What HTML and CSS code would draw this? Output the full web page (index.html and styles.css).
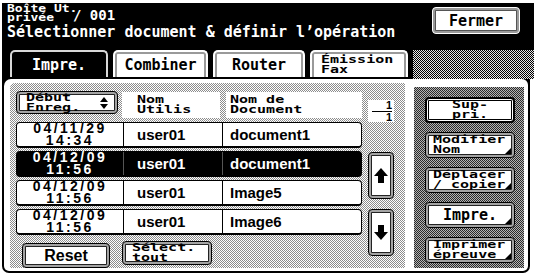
FILE: index.html
```html
<!DOCTYPE html>
<html lang="fr">
<head>
<meta charset="utf-8">
<title>Boîte Ut. privée</title>
<link rel="stylesheet" href="styles.css">
</head>
<body>
<div class="screen">
  <header class="top">
    <div class="titles">
      <div class="t1"><span class="sq sq-title">Boîte Ut.<br>privée</span><span class="num">/ 001</span></div>
      <div class="t2">Sélectionner document &amp; définir l’opération</div>
    </div>
    <div class="btn fermer">Fermer</div>
  </header>
  <nav class="tabs">
    <div class="tab active">Impre.</div>
    <div class="tab t-comb">Combiner</div>
    <div class="tab t-route">Router</div>
    <div class="tab t-fax"><span class="sq">Émission<br>Fax</span></div>
    <div class="tab-fill"></div>
  </nav>
  <div class="panel-wrap">
    <main class="panel">
      <section class="list">
        <div class="list-main">
          <div class="list-head">
            <div class="btn sort"><span class="sq">Début<br>Enreg.</span>
              <svg class="sort-ico" width="8" height="12" viewBox="0 0 8 12"><polygon points="4,0 8,5 0,5"/><polygon points="0,7 8,7 4,12"/></svg>
            </div>
            <div class="hcell h-user"><span class="sq">Nom<br>Utilis</span></div>
            <div class="hcell h-doc"><span class="sq">Nom de<br>Document</span></div>
          </div>
          <div class="rows">
            <div class="row"><div class="c date">04/11/29<br>14:34</div><div class="c user">user01</div><div class="c doc">document1</div></div>
            <div class="row sel"><div class="c date">04/12/09<br>11:56</div><div class="c user">user01</div><div class="c doc">document1</div></div>
            <div class="row"><div class="c date">04/12/09<br>11:56</div><div class="c user">user01</div><div class="c doc">Image5</div></div>
            <div class="row"><div class="c date">04/12/09<br>11:56</div><div class="c user">user01</div><div class="c doc">Image6</div></div>
          </div>
          <div class="list-foot">
            <div class="btn reset">Reset</div>
            <div class="btn selall"><span class="sq">Sélect.<br>tout</span></div>
          </div>
        </div>
        <div class="list-side">
          <div class="counter"><span class="cn">1</span><span class="cn cd">1</span></div>
          <div class="btn arrow up"><svg width="14" height="15" viewBox="0 0 14 15"><polygon points="7,0 14,8 10,8 10,15 4,15 4,8 0,8"/></svg></div>
          <div class="btn arrow down"><svg width="14" height="15" viewBox="0 0 14 15"><polygon points="4,0 10,0 10,7 14,7 7,15 0,7 4,7"/></svg></div>
        </div>
      </section>
      <aside class="actions">
        <div class="btn act sup"><span class="sq center">Sup-<br>pri.</span></div>
        <div class="btn act tri"><span class="sq">Modifier<br>Nom</span></div>
        <div class="btn act tri"><span class="sq">Déplacer<br>/ copier</span></div>
        <div class="btn act tri big">Impre.</div>
        <div class="btn act tri"><span class="sq">Imprimer<br>épreuve</span></div>
      </aside>
    </main>
  </div>
</div>
</body>
</html>
```
FILE: styles.css
```css
* { box-sizing: border-box; margin: 0; padding: 0; }
html, body { background: #fff; }
body {
  width: 534px; height: 276px; overflow: hidden;
  font-family: "DejaVu Sans Mono", "Liberation Mono", monospace;
  font-weight: bold; color: #000;
}
svg { display: block; fill: #000; }

.screen { margin: 3px 0 0 2px; width: 532px; }

/* header */
.top {
  height: 47px; background: #000; color: #fff;
  display: flex; justify-content: space-between; align-items: flex-start;
  padding-left: 5px;
}
.t1 { height: 20px; display: flex; align-items: center; }
.sq {
  display: inline-block; font-size: 15px; line-height: 13.7px;
  transform: scaleY(.73); transform-origin: left center; white-space: nowrap;
}
.sq.center { text-align: center; transform-origin: center center; }
.sq-title { font-size: 13px; line-height: 11px; transform: scaleY(.82); width: 66px; }
.num { font-size: 14px; margin-top: 3px; }
.t2 { font-size: 15px; line-height: 17px; margin-top: 1px; white-space: nowrap; }

.btn {
  background: #fff; color: #000;
  border: 1px solid #000; border-radius: 4px;
  box-shadow: inset 0 0 0 2px #a4a4a4, inset 0 0 0 3px #222;
  display: flex; align-items: center; position: relative;
}
.fermer {
  width: 88px; height: 27px; margin: 4px 14px 0 0;
  justify-content: center; font-size: 15px;
  border-color: #fff;
  box-shadow: inset 0 0 0 2px #9a9a9a, inset 0 0 0 3px #555;
}

/* tabs */
.tabs {
  height: 29px; background: #000; display: flex; align-items: flex-start;
  padding-left: 8px;
}
.tab {
  height: 27px; margin-right: 5px;
  border: 2px solid #fff; border-bottom: 0; border-radius: 5px 5px 0 0;
  background: #fff; color: #000;
  box-shadow: inset 0 2px 0 0 #9a9a9a, inset 2px 0 0 0 #9a9a9a, inset -2px 0 0 0 #9a9a9a;
  display: flex; align-items: center; justify-content: center;
  font-size: 15px;
}
.tab.active {
  width: 98px; background: #000; color: #fff;
  border-color: #d8d8d8; box-shadow: none;
}
.t-comb { width: 95px; }
.t-route { width: 92px; }
.t-fax { width: 98px; justify-content: flex-start; padding-left: 9px; }
.tab-fill {
  flex: 1; height: 29px; margin-left: 0;
  background: repeating-conic-gradient(#000 0 25%, #e6e6e6 0 50%) 0 0 / 2px 2px;
}

/* panel */
.panel-wrap {
  width: 528px; background: #000; padding: 0 2px 2px;
  border-radius: 0 0 7px 7px;
}
.panel {
  height: 192px; background: #fff; border-radius: 7px 6px 5px 5px;
  display: flex; align-items: flex-start;
  padding: 4px 4px 3px 6px;
}

/* list */
.list {
  width: 395px; height: 185px; display: flex;
  padding: 8px 0 0 6px; border-radius: 5px 0 0 0;
  background: repeating-conic-gradient(#8c8c8c 0 25%, #fff 0 50%) 0 0 / 2px 2px;
}
.list-main { width: 346px; }
.list-head { height: 31px; display: flex; align-items: flex-start; }
.sort {
  width: 102px; height: 23px; padding-left: 9px;
  justify-content: space-between; padding-right: 9px;
}
.hcell {
  height: 26px; margin-top: 1px; background: #fff;
  display: flex; align-items: center;
}
.h-user { width: 98px; margin-left: 4px; padding-left: 15px; }
.h-doc { width: 136px; margin-left: 6px; padding-left: 4px; }

.rows { display: flex; flex-direction: column; gap: 3px; }
.row {
  height: 26px; display: flex; background: #fff;
  border: 1px solid #000; border-bottom-width: 2px; border-radius: 4px;
  font-family: "Liberation Sans", Arial, sans-serif;
}
.row.sel { background: #000; color: #fff; }
.c { display: flex; align-items: center; }
.c + .c { border-left: 1px solid #000; }
.row.sel .c + .c { border-left-color: #555; }
.date {
  width: 106px; justify-content: center; text-align: center;
  font-size: 14px; line-height: 11.5px; letter-spacing: 2.5px;
}
.user { width: 99px; padding-left: 13px; font-size: 15px; }
.doc { flex: 1; padding-left: 7px; font-size: 15px; }

.list-foot { display: flex; align-items: flex-start; margin-top: 6px; }
.reset {
  width: 88px; height: 25px; margin: 2px 0 0 6px;
  justify-content: center; font-family: "Liberation Sans", Arial, sans-serif; font-size: 16px;
}
.selall { width: 90px; height: 24px; margin-left: 12px; padding-left: 9px; }

.list-side { width: 26px; margin-left: 6px; }
.counter {
  height: 22px; margin-top: 9px; background: #fff;
  display: flex; flex-direction: column; align-items: flex-end;
  font-family: "Liberation Sans", Arial, sans-serif; font-size: 11px; line-height: 11px;
  padding-right: 2px;
}
.cn { display: block; width: 20px; text-align: right; }
.cd { border-top: 1px solid #000; }
.arrow { width: 26px; height: 47px; justify-content: center; }
.up { margin-top: 30px; }
.down { margin-top: 10px; }

/* actions */
.actions {
  width: 110px; height: 181px; margin: 4px 0 0 9px;
  padding: 10px 9px 0 11px;
  display: flex; flex-direction: column; gap: 9px;
  background: repeating-conic-gradient(#2a2a2a 0 25%, #b4b4b4 0 50%) 0 0 / 2px 2px;
}
.act { width: 90px; height: 26px; padding-left: 7px; }
.sup {
  justify-content: center; padding-left: 0;
  border: 2px solid #000;
  box-shadow: inset 0 0 0 1px #fff, inset 0 0 0 2px #000;
}
.big { justify-content: center; font-size: 15px; padding-left: 0; }
.tri::after {
  content: ""; position: absolute; right: 3px; bottom: 3px;
  width: 0; height: 0;
  border-left: 6px solid transparent; border-bottom: 6px solid #000;
}
```
